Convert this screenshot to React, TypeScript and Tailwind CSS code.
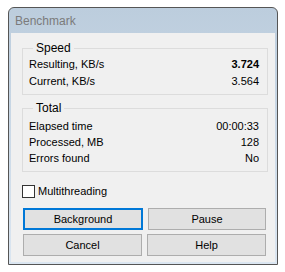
import { ReactNode } from "react";

type Row = { label: string; value: string; bold?: boolean };

const speedRows: Row[] = [
  { label: "Resulting, KB/s", value: "3.724", bold: true },
  { label: "Current, KB/s", value: "3.564" },
];

const totalRows: Row[] = [
  { label: "Elapsed time", value: "00:00:33" },
  { label: "Processed, MB", value: "128" },
  { label: "Errors found", value: "No" },
];

function Group({
  title,
  rows,
  rowHeight,
  className,
}: {
  title: string;
  rows: Row[];
  rowHeight: string;
  className: string;
}) {
  return (
    <fieldset className={`border border-[#dcdcdc] pl-[6px] pr-[8px] min-w-0 ${className}`}>
      <legend className="ml-[4px] px-[3px] leading-[13px] text-[12px]">{title}</legend>
      {rows.map((row) => (
        <div key={row.label} className={`flex items-center justify-between ${rowHeight}`}>
          <span>{row.label}</span>
          <span className={row.bold ? "font-bold" : ""}>{row.value}</span>
        </div>
      ))}
    </fieldset>
  );
}

function Btn({ children, active }: { children: ReactNode; active?: boolean }) {
  return (
    <button
      className={`flex-1 h-[22px] bg-[#e1e1e1] flex items-center justify-center ${
        active ? "border-2 border-[#0078d7]" : "border border-[#adadad]"
      }`}
    >
      {children}
    </button>
  );
}

export default function App() {
  return (
    <div
      className="w-[285px] h-[272px] bg-white pt-[7px] pl-[8px] text-[11px] text-black"
      style={{ fontFamily: '"Liberation Sans", Arial, sans-serif' }}
    >
      <div className="w-[270px] h-[258px] border border-[#555555] rounded-t-[6px] bg-gradient-to-b from-[#bccddd] to-[#dbe6f1] flex flex-col overflow-hidden">
        {/* title bar */}
        <div className="h-[25px] flex items-center pl-[6px] text-[12px] text-[#7b7b7b] shrink-0">
          Benchmark
        </div>
        {/* client */}
        <div className="flex-1 mx-[2px] mb-[2px] bg-[#f0f0f0] pl-[11px] pr-[7px] pt-[9px] flex flex-col">
          <Group title="Speed" rows={speedRows} rowHeight="h-[17px]" className="pt-[1px] pb-[4px]" />
          <Group title="Total" rows={totalRows} rowHeight="h-[16px]" className="mt-[7px] pt-[3px] pb-[5px]" />

          <label className="flex items-center mt-[13px] h-[13px]">
            <span className="w-[13px] h-[13px] border border-[#333333] bg-white" />
            <span className="ml-[3px]">Multithreading</span>
          </label>

          <div className="mt-[10px] ml-[1px] mr-[2px] flex flex-col gap-[4px]">
            <div className="flex gap-[5px]">
              <Btn active>Background</Btn>
              <Btn>Pause</Btn>
            </div>
            <div className="flex gap-[5px]">
              <Btn>Cancel</Btn>
              <Btn>Help</Btn>
            </div>
          </div>
        </div>
      </div>
    </div>
  );
}
